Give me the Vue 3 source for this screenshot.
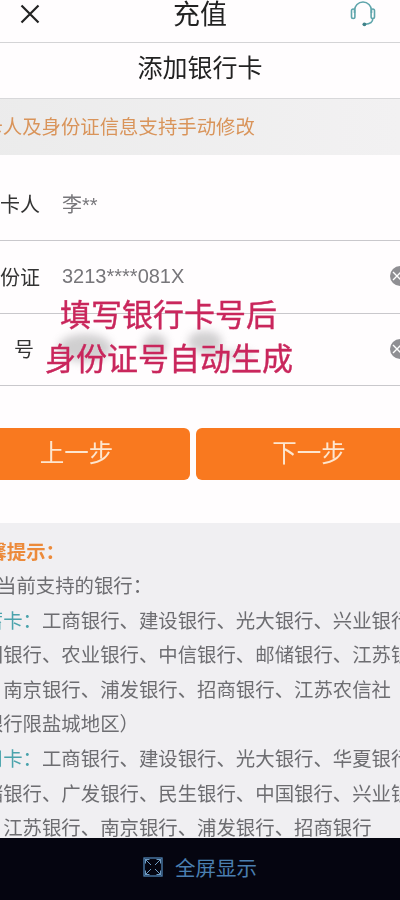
<script setup>
const rows = [
  { label: '持卡人', value: '李**', first: true },
  { label: '身份证', value: '3213****081X', clear: true },
  { label: '卡　号', value: '', clear: true, narrow: true },
]
const lines = [
  { tag: '储蓄卡：', text: '工商银行、建设银行、光大银行、兴业银行、' },
  { text: '中国银行、农业银行、中信银行、邮储银行、江苏银行、' },
  { text: '行、南京银行、浦发银行、招商银行、江苏农信社' },
  { text: '商银行限盐城地区）' },
  { tag: '信用卡：', text: '工商银行、建设银行、光大银行、华夏银行、' },
  { text: '邮储银行、广发银行、民生银行、中国银行、兴业银行、' },
  { text: '行、江苏银行、南京银行、浦发银行、招商银行' },
]
</script>

<template>
  <div class="page">
    <div class="soft">
      <header class="top">
        <svg class="close" viewBox="0 0 20 20" width="20" height="20">
          <path d="M1.5 1.5 18.5 18.5M18.5 1.5 1.5 18.5" fill="none" stroke="#222" stroke-width="2.2" />
        </svg>
        <span class="top-title">充值</span>
        <svg class="headset" viewBox="0 0 26 28" width="26" height="28">
          <path d="M4.5 13V10.5a8.5 8.5 0 0 1 17 0V13" fill="none" stroke="#5fa5ab" stroke-width="1.6" />
          <rect x="1.5" y="9" width="3.4" height="9.5" rx="1.7" fill="none" stroke="#5fa5ab" stroke-width="1.6" />
          <rect x="21.1" y="9" width="3.4" height="9.5" rx="1.7" fill="none" stroke="#5fa5ab" stroke-width="1.6" />
          <path d="M22.8 18.5c0 3.6-3 5.5-7.8 5.7" fill="none" stroke="#5fa5ab" stroke-width="1.6" />
          <circle cx="14.4" cy="24.3" r="1.9" fill="#3f8289" />
        </svg>
      </header>

      <h1 class="sub">添加银行卡</h1>
      <p class="notice">持卡人及身份证信息支持手动修改</p>

      <section class="form">
        <div v-for="row in rows" :key="row.label" class="row" :class="{ first: row.first }">
          <span class="label" :class="{ narrow: row.narrow }">{{ row.label }}</span>
          <span class="value">{{ row.value }}</span>
          <span v-if="row.clear" class="clear">
            <svg viewBox="0 0 10 10" width="10" height="10">
              <path d="M1 1 9 9M9 1 1 9" stroke="#fff" stroke-width="1.4" />
            </svg>
          </span>
        </div>
      </section>

      <div class="actions">
        <button class="btn prev">上一步</button>
        <button class="btn next">下一步</button>
      </div>

      <section class="tips">
        <p class="tips-title">温馨提示：</p>
        <p class="line intro">当前支持的银行：</p>
        <p v-for="(l, i) in lines" :key="i" class="line bank">
          <span v-if="l.tag" class="tag">{{ l.tag }}</span>{{ l.text }}
        </p>
      </section>

      <div class="smudge s1"></div>
      <div class="smudge s2"></div>
      <div class="smudge s3"></div>
      <div class="smudge s4"></div>
      <p class="stamp s-a">填写银行卡号后</p>
      <p class="stamp s-b">身份证号自动生成</p>
    </div>

    <footer class="bar">
      <svg viewBox="0 0 20 20" width="20" height="20">
        <rect x="1" y="1" width="18" height="18" fill="none" stroke="#4f83b3" stroke-width="1.3" />
        <path d="M2 2 8 8M18 2 12 8M2 18 8 12M18 18 12 12" fill="none" stroke="#6f9bc2" stroke-width="1" />
        <path d="M2.5 6.5V2.5H6.5M13.5 2.5H17.5V6.5M2.5 13.5V17.5H6.5M13.5 17.5H17.5V13.5" fill="none" stroke="#6f9bc2" stroke-width="1" />
      </svg>
      <span>全屏显示</span>
    </footer>
  </div>
</template>

<style>
html, body { margin: 0; background: #fffdfe; }
</style>

<style scoped>
* { box-sizing: border-box; }
.page {
  position: relative;
  width: 400px;
  height: 900px;
  overflow: hidden;
  display: flex;
  flex-direction: column;
  background: #fffdfe;
  font-family: "Liberation Sans", "Noto Sans CJK SC", sans-serif;
}
.soft {
  position: relative;
  flex: 1;
  min-height: 0;
  display: flex;
  flex-direction: column;
  overflow: hidden;
  filter: blur(0.45px);
}
.top {
  height: 43px;
  flex: none;
  display: flex;
  align-items: flex-start;
  justify-content: space-between;
  padding: 0 24px 0 20px;
  border-bottom: 1px solid #d4d4d6;
  position: relative;
}
.close { margin-top: 4px; flex: none; }
.headset { flex: none; margin-top: 0; }
.top-title {
  position: absolute;
  left: 0;
  right: 0;
  top: 0;
  text-align: center;
  font-size: 27px;
  line-height: 29px;
  color: #222;
  transform: translateY(1px);
}
.sub {
  margin: 0;
  height: 56px;
  flex: none;
  font-size: 25px;
  font-weight: 400;
  line-height: 50px;
  text-align: center;
  color: #222;
  border-bottom: 1px solid #d8d8da;
}
.notice {
  margin: 0 0 0 -36px;
  height: 56px;
  flex: none;
  width: 436px;
  font-size: 19.4px;
  line-height: 56px;
  color: #d9945a;
  background: linear-gradient(90deg, #ebebeb, #f2f1f2);
  white-space: nowrap;
}
.form { flex: none; }
.row {
  height: 73px;
  display: flex;
  align-items: center;
  border-bottom: 1px solid #c9c8cc;
  margin-left: -20px;
  padding-bottom: 2px;
  position: relative;
}
.row:last-child { height: 72px; }
.row.first { height: 86px; padding-top: 11px; padding-bottom: 0; }
.label {
  width: 60px;
  flex: none;
  text-align: right;
  font-size: 20px;
  color: #333;
  white-space: nowrap;
}
.label.narrow { margin-left: -6px; margin-right: 6px; }
.value {
  margin-left: 22px;
  font-size: 20px;
  color: #77767a;
  white-space: nowrap;
}
.clear {
  margin-left: auto;
  margin-right: -10px;
  width: 20px;
  height: 20px;
  border-radius: 50%;
  background: #8f8f93;
  display: flex;
  align-items: center;
  padding-left: 2px;
  flex: none;
}
.actions {
  flex: none;
  display: flex;
  gap: 6px;
  margin: 42px -10px 0 -10px;
  height: 52px;
}
.btn {
  flex: none;
  height: 52px;
  border: 0;
  border-radius: 6px;
  background: #f9791f;
  color: #fde6cf;
  font: inherit;
  font-size: 24.5px;
  padding: 0 0 6px;
}
.prev { width: 200px; padding-right: 27px; }
.next { width: 214px; padding-left: 24px; padding-right: 12px; }
.tips {
  flex: 1;
  min-height: 0;
  margin-top: 43px;
  background: #f0eff2;
  overflow: hidden;
  padding-top: 11.5px;
}
.tips p { margin: 0; white-space: nowrap; line-height: 34.6px; font-size: 19.4px; }
.tips .tips-title {
  margin-left: -32px;
  color: #ec8a3a;
  font-weight: 700;
}
.line { color: #6d6d71; }
.tips .intro { margin-left: -3px; }
.tips .bank { margin-left: -35.6px; }
.tag { color: #4aa3ac; }
.smudge {
  position: absolute;
  background: #98989a;
  border-radius: 50%;
  filter: blur(4px);
  opacity: 0.45;
}
.s1 { left: 58px; top: 334px; width: 54px; height: 28px; }
.s2 { left: 143px; top: 334px; width: 24px; height: 22px; }
.s3 { left: 188px; top: 331px; width: 34px; height: 22px; }
.s4 { left: 205px; top: 350px; width: 50px; height: 10px; opacity: 0.3; }
.stamp {
  position: absolute;
  margin: 0;
  font-size: 31px;
  line-height: 40px;
  color: #c9265c;
  -webkit-text-stroke: 0.4px #c9265c;
  white-space: nowrap;
}
.s-a { left: 60px; top: 296px; }
.s-b { left: 45px; top: 340px; }
.bar {
  flex: none;
  height: 62px;
  background: #050510;
  color: #4a7fb0;
  display: flex;
  align-items: center;
  justify-content: center;
  gap: 12px;
  font-size: 20.5px;
  padding-bottom: 5px;
}
</style>
